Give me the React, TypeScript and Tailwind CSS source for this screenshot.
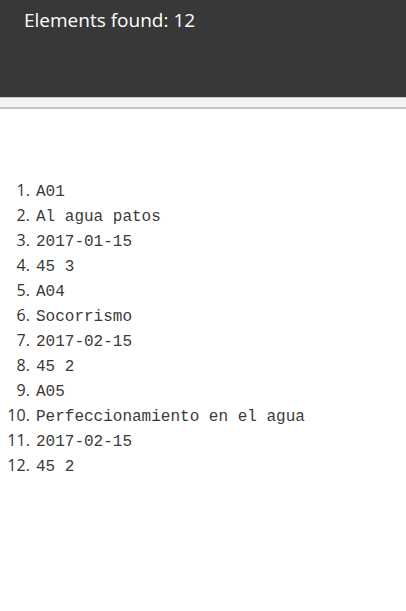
import React from "react";

const items = [
  "A01",
  "Al agua patos",
  "2017-01-15",
  "45 3",
  "A04",
  "Socorrismo",
  "2017-02-15",
  "45 2",
  "A05",
  "Perfeccionamiento en el agua",
  "2017-02-15",
  "45 2",
];

export default function App() {
  return (
    <div className="w-[406px] h-[611px] bg-white overflow-hidden" style={{ fontFamily: '"Open Sans", "Noto Sans", sans-serif' }}>
      <div className="h-[97px] bg-[#383838] pl-6 pt-[6px]">
        <div className="text-white text-[19px] leading-[28px]">Elements found: {items.length}</div>
      </div>
      <div className="h-[12px] bg-[#f3f3f3] border-t border-t-[#c4c4c4] border-b-2 border-b-[#c4c4c4]" />
      <ol className="list-decimal pl-[34px] mt-[69px] text-[#333]">
        {items.map((t, i) => (
          <li key={i} className="h-[25px] leading-[25px] text-[16px]">
            <span className="pl-[2px] text-[16px] text-[#3a3a3a]" style={{ fontFamily: '"Liberation Mono", monospace' }}>{t}</span>
          </li>
        ))}
      </ol>
    </div>
  );
}
